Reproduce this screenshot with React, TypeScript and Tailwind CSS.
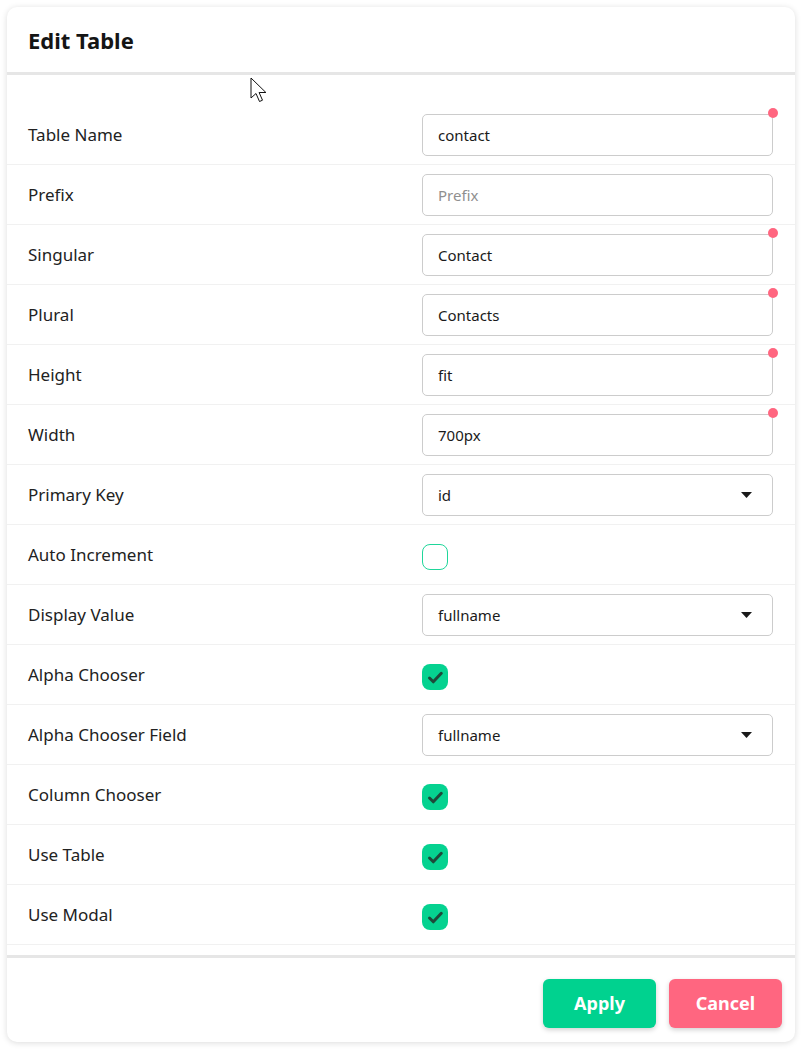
import React from "react";

type Row =
  | { label: string; kind: "input"; value: string; placeholder?: string; required?: boolean }
  | { label: string; kind: "select"; value: string }
  | { label: string; kind: "check"; checked: boolean };

const rows: Row[] = [
  { label: "Table Name", kind: "input", value: "contact", required: true },
  { label: "Prefix", kind: "input", value: "", placeholder: "Prefix" },
  { label: "Singular", kind: "input", value: "Contact", required: true },
  { label: "Plural", kind: "input", value: "Contacts", required: true },
  { label: "Height", kind: "input", value: "fit", required: true },
  { label: "Width", kind: "input", value: "700px", required: true },
  { label: "Primary Key", kind: "select", value: "id" },
  { label: "Auto Increment", kind: "check", checked: false },
  { label: "Display Value", kind: "select", value: "fullname" },
  { label: "Alpha Chooser", kind: "check", checked: true },
  { label: "Alpha Chooser Field", kind: "select", value: "fullname" },
  { label: "Column Chooser", kind: "check", checked: true },
  { label: "Use Table", kind: "check", checked: true },
  { label: "Use Modal", kind: "check", checked: true },
];

function Control({ row }: { row: Row }) {
  if (row.kind === "input") {
    return (
      <div className="relative w-[351px]">
        <input
          defaultValue={row.value}
          placeholder={row.placeholder}
          className="h-[42px] w-full rounded-[5px] border border-[#cccccc] bg-white px-[15px] text-[15px] text-[#1a1a1a] placeholder:text-[#8f8f8f] focus:outline-none"
        />
        {row.required && (
          <span className="absolute -right-[5px] -top-[6px] h-[10px] w-[10px] rounded-full bg-[#ff6680]" />
        )}
      </div>
    );
  }
  if (row.kind === "select") {
    return (
      <div className="flex h-[42px] w-[351px] items-center justify-between rounded-[5px] border border-[#cccccc] bg-white pl-[15px] pr-[20px] text-[15px] text-[#1a1a1a]">
        <span>{row.value}</span>
        <svg width="11" height="6" viewBox="0 0 11 6">
          <path d="M0 0h11L5.5 6z" fill="#1a1a1a" />
        </svg>
      </div>
    );
  }
  return row.checked ? (
    <div className="mt-[4px] flex h-[26px] w-[26px] items-center justify-center rounded-[8px] bg-[#05d290]">
      <svg width="17" height="15" viewBox="0 0 17 15">
        <path d="M2.5 8l3.8 3.8L14.3 3.3" fill="none" stroke="#1d4a3a" strokeWidth="3" strokeLinecap="round" strokeLinejoin="round" />
      </svg>
    </div>
  ) : (
    <div className="mt-[4px] h-[26px] w-[26px] rounded-[8px] border border-[#1fd69a] bg-white" />
  );
}

export default function App() {
  return (
    <div className="relative min-h-[1050px] bg-white p-[7px] font-['Noto_Sans','Open_Sans',sans-serif] text-[#1f1f1f]">
      <div className="flex w-[788px] flex-col rounded-[10px] bg-white shadow-[0_1px_6px_rgba(0,0,0,0.14)]">
        <div className="flex h-[68px] items-center border-b-[3px] border-[#e6e6e6] px-[21px] pt-[2px]">
          <h2 className="text-[22px] font-bold text-[#151515]">Edit Table</h2>
        </div>

        <div className="pb-[10px] pt-[30px]">
          {rows.map((row) => (
            <div
              key={row.label}
              className="flex h-[60px] items-center border-b border-[#f1f1f1] px-[21px] pt-[1px]"
            >
              <div className="w-[394px] text-[17px] text-[#222222]">{row.label}</div>
              <Control row={row} />
            </div>
          ))}
        </div>

        <div className="flex items-start justify-end gap-[13px] border-t-[3px] border-[#e6e6e6] px-[13px] pb-[14px] pt-[21px]">
          <button className="h-[49px] w-[113px] rounded-[6px] bg-[#00d28f] text-[18px] font-bold text-white shadow-[0_2px_5px_rgba(0,0,0,0.18)]">
            Apply
          </button>
          <button className="h-[49px] w-[113px] rounded-[6px] bg-[#ff6680] text-[18px] font-bold text-white shadow-[0_2px_5px_rgba(0,0,0,0.18)]">
            Cancel
          </button>
        </div>
      </div>

      {/* mouse pointer captured in the screenshot */}
      <svg className="absolute left-[250px] top-[77px]" width="20" height="28" viewBox="0 0 20 28">
        <path d="M1 1v20l5-4.5 3.5 8 3-1.3-3.4-7.7h6.8z" fill="white" stroke="#111" strokeWidth="1" strokeLinejoin="round" />
      </svg>
    </div>
  );
}
